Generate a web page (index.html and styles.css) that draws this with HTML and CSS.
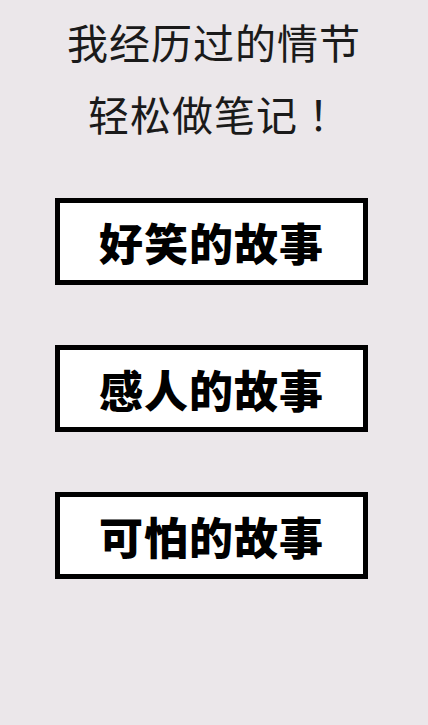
FILE: index.html
```html
<!DOCTYPE html>
<html lang="zh-CN">
<head>
<meta charset="utf-8">
<link rel="stylesheet" href="styles.css">
</head>
<body>
<main class="page">
  <header class="title">
    <p class="line">我经历过的情节</p>
    <p class="line">轻松做笔记<span class="punct" lang="zh-TW">！</span></p>
  </header>
  <nav class="menu">
    <div class="btn">好笑的故事</div>
    <div class="btn">感人的故事</div>
    <div class="btn">可怕的故事</div>
  </nav>
</main>
</body>
</html>
```
FILE: styles.css
```css
html, body {
  margin: 0;
  padding: 0;
  background: #ebe7ea;
}
.page {
  width: 428px;
  height: 725px;
  font-family: "Noto Sans CJK SC", "Noto Sans", sans-serif;
  color: #1a1a1a;
}
.title {
  padding-top: 5px;
  display: flex;
  flex-direction: column;
  align-items: center;
}
.line {
  margin: 0;
  font-size: 41px;
  line-height: 72px;
  font-weight: 400;
  letter-spacing: 1px;
}
.punct {
  font-family: "Noto Sans CJK TC", "Noto Sans CJK SC", sans-serif;
}
.menu {
  margin-top: 49px;
  padding-left: 55px;
  display: flex;
  flex-direction: column;
  gap: 60px;
}
.btn {
  box-sizing: border-box;
  width: 313px;
  height: 87px;
  border: 5px solid #000;
  background: #fff;
  display: flex;
  align-items: center;
  justify-content: center;
  font-size: 44px;
  font-weight: 900;
  color: #000;
  letter-spacing: 1px;
}
```
